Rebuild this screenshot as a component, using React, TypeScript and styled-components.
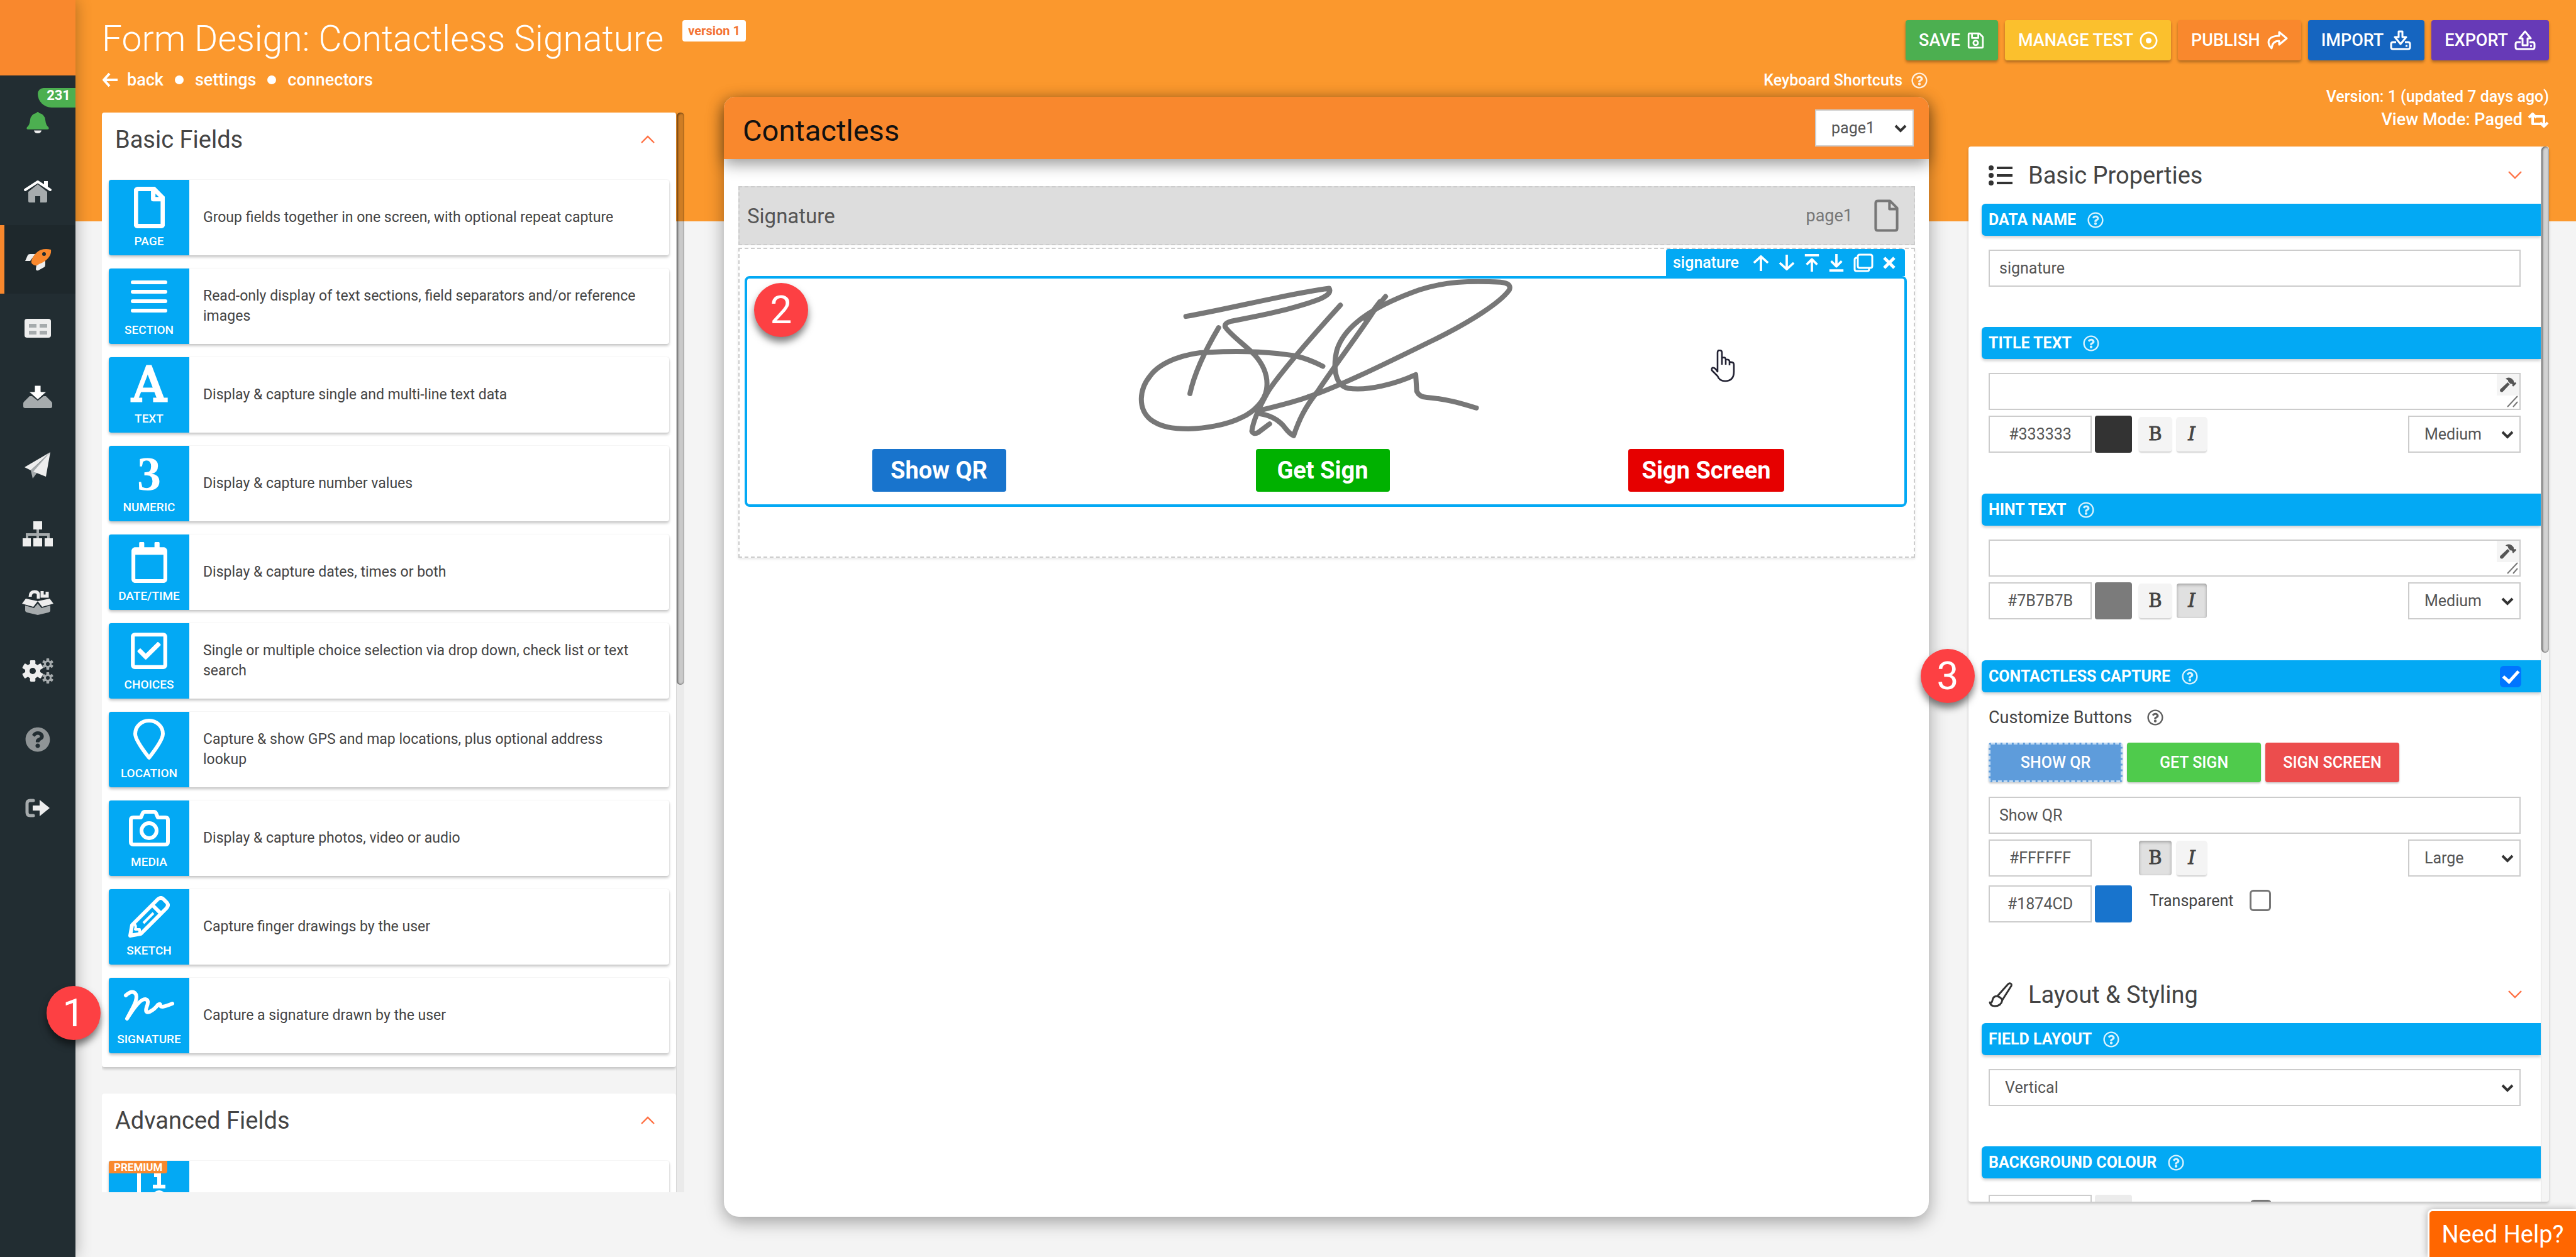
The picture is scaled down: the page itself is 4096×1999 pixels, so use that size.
import React from "react";
import styled, { createGlobalStyle, css } from "styled-components";
import { FaHammer, FaRegCalendar, FaRegCheckSquare, FaRegDotCircle, FaRegQuestionCircle, FaRegSave, FaQuestionCircle } from "react-icons/fa";

const blue = "#03a9f4";
const orange = "#fb982d";
const deepOrange = "#f9882d";
const light = "#eeeeee";
const grey = "#a6abad";

const GlobalStyle = createGlobalStyle`
  * { box-sizing: border-box; }
  body { margin: 0; font-family: Roboto, "Liberation Sans", sans-serif; color: #444; background: #f4f4f4; }
  button, input, select, textarea { font: inherit; color: inherit; margin: 0; }
  button { border: 0; padding: 0; cursor: pointer; }
  svg { display: block; flex: none; }
  h1, h2, p { margin: 0; font-weight: 400; }
  a { color: inherit; text-decoration: none; }
`;

const Page = styled.div`
  position: relative;
  display: flex;
  height: 100vh;
  overflow: hidden;
`;

/* ---------- navigation rail ---------- */
const Rail = styled.nav`
  position: relative;
  z-index: 1;
  width: 120px;
  flex: none;
  background: #222d32;
  box-shadow: 0 0 24px rgba(0, 0, 0, 0.3);
`;
const Brand = styled.div`
  height: 120px;
  margin-bottom: 20px;
  background: ${deepOrange};
`;
const RailLink = styled.a<{ $active?: boolean }>`
  position: relative;
  display: flex;
  align-items: center;
  justify-content: center;
  height: 109px;
  ${(p) => p.$active && css`
    background: #1e282c;
    box-shadow: inset 7px 0 0 ${deepOrange};
  `}
`;
const Count = styled.span`
  position: absolute;
  top: 0;
  right: 0;
  width: 60px;
  height: 31px;
  padding-right: 8px;
  border-radius: 10px 0 0 24px;
  background: #4caf50;
  color: #fff;
  font-weight: 700;
  font-size: 22px;
  line-height: 24px;
  text-align: right;
`;

/* ---------- page frame ---------- */
const Main = styled.main`
  flex: 1;
  min-width: 0;
  display: flex;
  flex-direction: column;
  padding: 0 43px 0 42px;
  background: linear-gradient(${orange} 352px, #f4f4f4 352px);
`;
const TopRow = styled.header`
  display: flex;
  align-items: flex-start;
  height: 110px;
  padding-top: 32px;
  color: #fff;
`;
const FormTitle = styled.h1`
  font-weight: 300;
  font-size: 57px;
  line-height: 60px;
`;
const VersionTag = styled.span`
  margin-left: 30px;
  padding: 0 9px;
  border-radius: 4px;
  background: #fff;
  color: #f37334;
  font-weight: 700;
  font-size: 20px;
  line-height: 34px;
`;
const Actions = styled.div`
  display: flex;
  gap: 11px;
  margin-left: auto;
`;
const ActionButton = styled.button<{ $color: string }>`
  display: flex;
  align-items: center;
  gap: 10px;
  height: 64px;
  padding: 0 21px;
  border-radius: 4px;
  background: ${(p) => p.$color};
  color: #fff;
  font-weight: 500;
  font-size: 27px;
  box-shadow: 0 3px 4px rgba(0, 0, 0, 0.3);
`;
const Columns = styled.div`
  flex: 1;
  min-height: 0;
  display: grid;
  grid-template-columns: 926px minmax(0, 1fr) 923px;
  gap: 63px;
`;
const Column = styled.section<{ $top?: number; $bottom: number }>`
  display: flex;
  flex-direction: column;
  min-height: 0;
  padding: ${(p) => p.$top || 0}px 0 ${(p) => p.$bottom}px;
`;
const Crumbs = styled.div`
  display: flex;
  align-items: center;
  gap: 18px;
  margin-bottom: 35px;
  color: #fff;
  font-weight: 500;
  font-size: 27px;
  line-height: 34px;
`;
const BackLink = styled.a`
  display: flex;
  align-items: center;
  gap: 15px;
`;
const Dot = styled.span`
  width: 14px;
  height: 14px;
  border-radius: 50%;
  background: #fff;
`;
const Shortcuts = styled.a`
  display: flex;
  align-items: center;
  justify-content: flex-end;
  gap: 14px;
  margin-bottom: 8px;
  padding-right: 2px;
  color: #fff;
  font-size: 25px;
  font-weight: 500;
  line-height: 36px;
`;
const VersionInfo = styled.div`
  display: flex;
  flex-direction: column;
  align-items: flex-end;
  margin-bottom: 24px;
  color: #fff;
  font-size: 25px;
  font-weight: 500;
  line-height: 37px;
`;
const ModeLink = styled.a`
  display: flex;
  align-items: center;
  gap: 8px;
  font-size: 27px;
`;

/* ---------- scrolling panels ---------- */
const ScrollPanel = styled.div<{ $card?: boolean }>`
  flex: 1;
  min-height: 0;
  display: flex;
  overflow: hidden;
  ${(p) => p.$card && css`
    background: #fff;
    border-radius: 4px;
    box-shadow: 0 3px 4px rgba(0, 0, 0, 0.2);
  `}
`;
const ScrollBody = styled.div`
  flex: 1;
  min-width: 0;
  overflow: hidden;
`;
const Track = styled.div`
  width: 13px;
  flex: none;
  background: rgba(0, 0, 0, 0.04);
  border-left: 1px solid rgba(0, 0, 0, 0.08);
`;
const Thumb = styled.div<{ $share: number }>`
  height: ${(p) => p.$share}%;
  border-radius: 7px;
  background: rgba(0, 0, 0, 0.14);
  box-shadow: inset 2px 1px 3px rgba(0, 0, 0, 0.5), inset -1px -1px 2px rgba(0, 0, 0, 0.25);
`;

/* ---------- field palette ---------- */
const Palette = styled.div`
  margin-bottom: 42px;
  padding: 0 11px 22px;
  border-radius: 4px;
  background: #fff;
  box-shadow: 0 3px 4px rgba(0, 0, 0, 0.2);
`;
const PaletteHead = styled.div`
  display: flex;
  align-items: center;
  justify-content: space-between;
  height: 85px;
  margin-bottom: 22px;
  padding: 0 22px 0 10px;
`;
const PanelTitle = styled.h2`
  font-size: 38px;
  line-height: 48px;
  color: #444;
`;
const FieldList = styled.div`
  display: flex;
  flex-direction: column;
  gap: 21px;
`;
const FieldCard = styled.div`
  display: flex;
  height: 120px;
  border-radius: 4px;
  box-shadow: 0 3px 4px rgba(0, 0, 0, 0.22), 0 0 2px rgba(0, 0, 0, 0.1);
`;
const Tile = styled.div`
  position: relative;
  width: 128px;
  flex: none;
  border-radius: 4px 0 0 4px;
  background: ${blue};
  color: #fff;
  text-align: center;
`;
const TileIcon = styled.div`
  display: flex;
  align-items: center;
  justify-content: center;
  height: 88px;
`;
const TileLabel = styled.div`
  font-weight: 500;
  font-size: 19px;
  line-height: 20px;
`;
const Numeral = styled.span`
  font-family: "Liberation Serif", serif;
  font-weight: 700;
  font-size: 76px;
  line-height: 88px;
`;
const Letter = styled.span`
  font-family: "DejaVu Serif", serif;
  font-size: 76px;
  line-height: 88px;
  -webkit-text-stroke: 3px #fff;
`;
const FieldText = styled.p`
  align-self: center;
  padding: 0 50px 0 22px;
  font-size: 23px;
  line-height: 32px;
`;
const Premium = styled.span`
  position: absolute;
  top: 0;
  left: 0;
  padding: 0 8px;
  border-radius: 4px 0 4px 0;
  background: ${deepOrange};
  color: #fff;
  font-weight: 700;
  font-size: 17px;
  line-height: 20px;
`;
const Chevron = ({ up }: { up?: boolean }) => (
  <svg width="24" height="15" viewBox="0 0 24 15" fill="none" stroke="#ff7043" strokeWidth="2.4">
    <path d={up ? "M2 13 12 3l10 10" : "M2 2l10 10L22 2"} />
  </svg>
);

/* ---------- form canvas ---------- */
const FormCard = styled.div`
  flex: 1;
  min-height: 0;
  border-radius: 18px 18px 24px 24px;
  background: #fff;
  box-shadow: 0 8px 28px rgba(0, 0, 0, 0.35);
`;
const FormHead = styled.div`
  display: flex;
  align-items: center;
  justify-content: space-between;
  height: 99px;
  padding: 0 24px 0 30px;
  border-radius: 18px 18px 0 0;
  background: ${deepOrange};
  box-shadow: 0 8px 24px rgba(0, 0, 0, 0.4);
`;
const FormName = styled.h2`
  font-size: 47px;
  line-height: 54px;
  padding-top: 8px;
  color: #111;
`;
const FormBody = styled.div`
  padding: 43px 22px 0 23px;
`;
const PageHead = styled.div`
  display: flex;
  align-items: center;
  height: 94px;
  margin-bottom: 4px;
  padding: 0 24px 0 12px;
  border: 2px dashed #ccc;
  background: #ddd;
  color: #777;
`;
const PageName = styled.span`
  flex: 1;
  color: #555;
  font-size: 33px;
`;
const PageId = styled.span`
  margin-right: 34px;
  font-size: 27px;
`;
const PageBody = styled.div`
  display: flex;
  flex-direction: column;
  padding: 0 11px 79px 8px;
  border: 2px dashed #ccc;
  box-shadow: 0 2px 4px rgba(0, 0, 0, 0.1);
`;
const FieldTab = styled.div`
  display: flex;
  align-items: center;
  align-self: flex-end;
  gap: 15px;
  height: 43px;
  margin-right: 3px;
  padding: 0 15px 0 11px;
  border-radius: 4px 4px 0 0;
  background: ${blue};
  color: #fff;
  font-weight: 500;
  font-size: 25px;
`;
const TabName = styled.span`
  margin-right: 7px;
`;
const TabButton = styled.button`
  background: none;
  color: #fff;
`;
const FieldBox = styled.div`
  position: relative;
  display: flex;
  flex-direction: column;
  align-items: center;
  gap: 16px;
  padding: 1px 10px 20px 0;
  border: 4px solid ${blue};
  border-radius: 8px;
  background: #fff;
`;
const CaptureRow = styled.div`
  display: grid;
  grid-template-columns: repeat(3, 1fr);
  justify-items: center;
  align-self: stretch;
`;
const CaptureButton = styled.button<{ $color: string }>`
  height: 68px;
  min-width: 213px;
  padding: 0 21px;
  border-radius: 4px;
  background: ${(p) => p.$color};
  color: #fff;
  font-weight: 700;
  font-size: 38px;
`;
const SignatureInk = styled.svg`
  margin-left: 12px;
`;
const Cursor = styled.svg`
  position: absolute;
  top: 113px;
  right: 268px;
`;

/* ---------- property controls ---------- */
const PropsHead = styled.div`
  display: flex;
  align-items: center;
  gap: 25px;
  height: 91px;
  padding: 0 29px 0 32px;
`;
const HeadTitle = styled(PanelTitle)`
  flex: 1;
`;
const Group = styled.div<{ $gap?: number }>`
  padding-bottom: ${(p) => p.$gap ?? 64}px;
`;
const Bar = styled.div`
  display: flex;
  align-items: center;
  gap: 18px;
  height: 51px;
  margin-left: 21px;
  padding: 0 31px 0 11px;
  border-radius: 6px 0 0 6px;
  background: ${blue};
  color: #fff;
  font-weight: 700;
  font-size: 25px;
  box-shadow: 0 3px 4px rgba(0, 0, 0, 0.18);
`;
const Controls = styled.div<{ $top?: number }>`
  display: flex;
  flex-direction: column;
  gap: 9px;
  padding: ${(p) => p.$top ?? 22}px 32px 0;
`;
const fieldLook = css`
  height: 59px;
  border: 2px solid #ccc;
  border-radius: 0;
  background: #fff;
  color: #555;
  font-size: 25px;
  outline: 0;
`;
const TextInput = styled.input`
  ${fieldLook}
  width: 100%;
  padding: 0 15px;
`;
const HexInput = styled.input`
  ${fieldLook}
  width: 164px;
  padding: 0;
  text-align: center;
`;
const AreaWrap = styled.div`
  position: relative;
  display: flex;
`;
const Area = styled.textarea`
  ${fieldLook}
  width: 100%;
  padding: 12px 15px;
  resize: none;
`;
const BuildButton = styled.button`
  position: absolute;
  top: 2px;
  right: 2px;
  display: flex;
  align-items: center;
  justify-content: center;
  width: 36px;
  height: 34px;
  background: #f4f4f4;
  color: #555;
`;
const Grip = styled.svg`
  position: absolute;
  right: 3px;
  bottom: 4px;
`;
const Row = styled.div<{ $top?: number }>`
  display: flex;
  align-items: center;
  padding-top: ${(p) => p.$top || 0}px;
`;
const Swatch = styled.button<{ $color: string }>`
  width: 59px;
  height: 59px;
  margin: 0 11px 0 5px;
  border-radius: 4px;
  background: ${(p) => p.$color};
`;
const Toggle = styled.button<{ $on?: boolean; $italic?: boolean; $w: number }>`
  width: ${(p) => p.$w}px;
  height: 55px;
  margin-right: 8px;
  border-radius: 4px;
  background: ${(p) => (p.$on ? "#e0e0e0" : "#f4f4f4")};
  color: #444;
  font-family: "DejaVu Serif", serif;
  font-size: 29px;
  font-style: ${(p) => (p.$italic ? "italic" : "normal")};
  line-height: 55px;
  -webkit-text-stroke: 1px #444;
  box-shadow: ${(p) => (p.$on ? "inset 0 2px 5px rgba(0,0,0,.3)" : "0 2px 2px rgba(0,0,0,.18)")};
`;
const SelectWrap = styled.div<{ $w?: number }>`
  position: relative;
  width: ${(p) => (p.$w ? p.$w + "px" : "100%")};
  margin-left: auto;
`;
const SelectBox = styled.select`
  ${fieldLook}
  display: block;
  width: 100%;
  padding: 0 0 0 24px;
  appearance: none;
`;
const SelectMark = styled.svg`
  position: absolute;
  right: 11px;
  top: 24px;
  pointer-events: none;
`;
const HelpIcon = styled(FaRegQuestionCircle)`
  opacity: 0.85;
`;
const Check = styled.input`
  appearance: none;
  display: grid;
  place-items: center;
  width: 34px;
  height: 34px;
  border: 3px solid #767676;
  border-radius: 6px;
  background: #fff;
  &:checked {
    border-color: #0075ff;
    background: #0075ff;
  }
  &:checked::after {
    content: "";
    width: 10px;
    height: 20px;
    margin-top: -5px;
    border: solid #fff;
    border-width: 0 5px 5px 0;
    transform: rotate(42deg);
  }
`;
const EndCheck = styled(Check)`
  margin-left: auto;
`;
const LoneCheck = styled(Check)`
  margin: 8px auto auto 177px;
`;
const CustomizeLabel = styled.div`
  display: flex;
  align-items: center;
  gap: 24px;
  height: 80px;
  padding: 0 32px;
  font-size: 27px;
`;
const PickRow = styled.div`
  display: flex;
  gap: 7px;
  padding: 0 32px;
`;
const PickButton = styled.button<{ $color: string; $picked?: boolean }>`
  width: 213px;
  height: 63px;
  border-radius: 4px;
  border: ${(p) => (p.$picked ? "3px dashed #c4dcf3" : "0")};
  background: ${(p) => p.$color};
  color: #fff;
  font-weight: 500;
  font-size: 25px;
  box-shadow: 0 2px 3px rgba(0, 0, 0, 0.2);
`;
const CheckLabel = styled.label`
  display: flex;
  align-items: center;
  gap: 26px;
  height: 48px;
  margin: 0 auto auto 17px;
  font-size: 25px;
`;

/* ---------- overlays ---------- */
const Step = styled.div`
  position: absolute;
  z-index: 2;
  width: 86px;
  height: 86px;
  border-radius: 50%;
  background: #fd4043;
  color: #fff;
  font-size: 62px;
  line-height: 86px;
  text-align: center;
  box-shadow: 0 8px 12px rgba(0, 0, 0, 0.5);
`;
const StepOne = styled(Step)`
  left: 74px;
  bottom: 345px;
`;
const StepTwo = styled(Step)`
  left: 11px;
  top: 7px;
`;
const StepThree = styled(Step)`
  right: 956px;
  top: 1032px;
`;
const NeedHelp = styled.button`
  position: absolute;
  right: 0;
  bottom: 0;
  width: 236px;
  height: 76px;
  border: solid #fff;
  border-width: 3px 0 0 3px;
  border-radius: 8px 0 0 0;
  background: #ff6600;
  color: #fff;
  font-size: 38px;
  box-shadow: 0 0 12px rgba(0, 0, 0, 0.3);
`;

/* ---------- icons ---------- */
const HomeIcon = () => (
  <svg width="46" height="36" viewBox="0 0 46 36">
    <path fill={grey} d="M8 19 23 7l15 12v15a2 2 0 0 1-2 2H27V26h-8v10h-9a2 2 0 0 1-2-2z" />
    <path fill="none" stroke="#fff" strokeWidth="4" strokeLinecap="round" strokeLinejoin="round" d="M3 16 23 3l20 13" />
    <path fill="#fff" d="M33 2h6v10l-6-4z" />
  </svg>
);
const RocketIcon = () => (
  <svg width="43" height="36" viewBox="0 0 43 36">
    <path fill={light} d="M1 20 5 11q1-2 4-2h8L9 20zM18 33l1-7 14-9v9q0 3-2 4l-9 5q-4 1-4-2z" />
    <path fill={deepOrange} d="M42 2Q28-1 20 6q-7 6-9 14-1 4 3 6 5 3 9-1 9-3 15-10 5-6 4-13z" />
    <circle cx="31" cy="9" r="3" fill="#222d32" />
  </svg>
);
const TableIcon = () => (
  <svg width="42" height="30" viewBox="0 0 42 30">
    <rect width="42" height="30" rx="4" fill={light} />
    <path fill={grey} d="M7 8h12v6H7zM24 8h12v6H24zM7 19h12v6H7zM24 19h12v6H24z" />
  </svg>
);
const InboxIcon = () => (
  <svg width="46" height="36" viewBox="0 0 46 40" preserveAspectRatio="none">
    <path fill={grey} d="M10 19h4l9 8 9-8h4l9 10q1 1 1 3v5q0 3-3 3H3q-3 0-3-3v-5q0-2 1-3z" />
    <path fill="#fff" stroke="#222d32" strokeWidth="1" d="M18 0h10v11h9L23 25 9 11h9z" />
  </svg>
);
const PlaneIcon = () => (
  <svg width="42" height="42" viewBox="0 0 42 42">
    <path fill={light} d="M41 0 0 24l10 5z" />
    <path fill={grey} d="M41 0 10 29l3 13 6-8z" />
    <path fill={light} d="M41 0 14 31l20 8z" />
  </svg>
);
const SitemapIcon = () => (
  <svg width="50" height="40" viewBox="0 0 50 40">
    <path fill="none" stroke={grey} strokeWidth="4" d="M25 12v16M8 28v-7h34v7" />
    <path fill={light} d="M18 0h14v13H18zM1 27h13v13H1zM18 27h14v13H18zM36 27h13v13H36z" />
  </svg>
);
const BoxIcon = () => (
  <svg width="50" height="40" viewBox="0 0 50 40">
    <path fill={grey} d="M5 25l14 4 6-7 6 7 14-4v8q0 2-3 3l-17 4-17-4q-3-1-3-3z" />
    <path fill={light} d="M6 14l19 4-7 9-18-5zM44 14l-19 4 7 9 18-5z" />
    <path fill="none" stroke={light} strokeWidth="5" d="M13 11q0-8 7-8 6 0 6 5v6M32 2v8h8V3" />
  </svg>
);
const gear = (cx: number, cy: number, r: number) =>
  Array.from({ length: 3 }, (_, i) => (
    <rect key={i} x={cx - r / 4} y={cy - r} width={r / 2} height={r * 2} rx={r / 12} transform={`rotate(${i * 60} ${cx} ${cy})`} />
  ));
const GearsIcon = () => (
  <svg width="50" height="40" viewBox="0 0 50 40">
    <g fill={light}>{gear(17, 20, 17)}<circle cx="17" cy="20" r="12" /></g>
    <circle cx="17" cy="20" r="5" fill="#222d32" />
    <g fill={grey}>{gear(41, 9, 9)}<circle cx="41" cy="9" r="6" />{gear(41, 31, 9)}<circle cx="41" cy="31" r="6" /></g>
    <circle cx="41" cy="9" r="3" fill="#222d32" /><circle cx="41" cy="31" r="3" fill="#222d32" />
  </svg>
);
const ExitIcon = () => (
  <svg width="40" height="30" viewBox="0 0 40 30">
    <path fill="none" stroke={grey} strokeWidth="5" strokeLinecap="round" d="M13 3H8Q3 3 3 8v14q0 5 5 5h5" />
    <path fill={light} d="M12 11h11V2l16 13-16 13v-9H12z" />
  </svg>
);
const BellIcon = () => (
  <svg width="36" height="36" viewBox="0 0 36 40" preserveAspectRatio="none">
    <path fill="#4caf50" d="M16 3a2 2 0 0 1 4 0q9 2 10 12 1 10 5 13 2 4-2 4H3q-4 0-2-4 4-3 5-13Q7 5 16 3z" />
    <path fill={light} d="M12 34h12q-1 5-6 5t-6-5z" />
  </svg>
);
const Line = ({ w, h, box, d, sw, cap }: { w: number; h: number; box: string; d: string; sw: number; cap?: boolean }) => (
  <svg width={w} height={h} viewBox={box} fill="none" stroke="currentColor" strokeWidth={sw} strokeLinejoin="round" strokeLinecap={cap ? "round" : "butt"}>
    <path d={d} />
  </svg>
);
const PageIcon = ({ w, h, sw }: { w: number; h: number; sw: number }) => (
  <Line w={w} h={h} box="0 0 48 64" sw={sw} d="M8 3h23l14 14v40q0 4-4 4H7q-4 0-4-4V7q0-4 5-4zM30 4v15h15" />
);
const CameraIcon = () => (
  <svg width="65" height="58" viewBox="0 0 65 58" fill="none" stroke="#fff" strokeWidth="6" strokeLinejoin="round">
    <path d="M7 12h12l3-7q1-2 3-2h15q2 0 3 2l3 7h12q4 0 4 4v35q0 4-4 4H7q-4 0-4-4V16q0-4 4-4z" />
    <circle cx="32" cy="33" r="12" />
  </svg>
);
const PencilIcon = () => (
  <svg width="66" height="66" viewBox="0 0 66 66" fill="none" stroke="#fff" strokeWidth="6" strokeLinejoin="round">
    <path d="M3 63l3-17L47 5q5-4 9 0l5 5q4 4 0 9L20 60zM38 14l14 14" />
    <path strokeWidth="4" d="M10 45q3 3 1 8h7v5" />
    <path strokeWidth="4" d="M24 43l16-16" />
  </svg>
);
const TrayArrow = ({ up }: { up?: boolean }) => (
  <svg width="34" height="32" viewBox="0 0 34 32" fill="none" stroke="#fff" strokeWidth="3" strokeLinejoin="round">
    <path d="M10 19H5q-3 0-3 3v5q0 3 3 3h24q3 0 3-3v-5q0-3-3-3h-5" />
    <path d={up ? "M13 24V13H8l9-11 9 11h-5v11z" : "M14 2h6v9h6l-9 11-9-11h6z"} />
    <path d="M25 25h3" />
  </svg>
);
const PublishIcon = () => (
  <Line w={34} h={30} box="0 0 34 30" sw={3} d="M20 2l12 10-12 10v-6Q9 16 8 28 1 21 4 14 8 8 20 8z" />
);
const SwapIcon = () => (
  <Line w={34} h={24} box="0 0 34 24" sw={4} d="M2 8l6-6 6 6M8 3v15h13M32 16l-6 6-6-6M26 21V6H13" />
);
const HelpMark = () => <HelpIcon size={26} />;

const fields: { label: string; text: string; icon: React.ReactNode }[] = [
  { label: "PAGE", text: "Group fields together in one screen, with optional repeat capture", icon: <PageIcon w={49} h={66} sw={7} /> },
  { label: "SECTION", text: "Read-only display of text sections, field separators and/or reference images", icon: <Line w={58} h={58} box="0 0 58 58" sw={6} cap d="M3 7h52M3 22h52M3 37h52M3 52h52" /> },
  { label: "TEXT", text: "Display & capture single and multi-line text data", icon: <Letter>A</Letter> },
  { label: "NUMERIC", text: "Display & capture number values", icon: <Numeral>3</Numeral> },
  { label: "DATE/TIME", text: "Display & capture dates, times or both", icon: <FaRegCalendar size={65} /> },
  { label: "CHOICES", text: "Single or multiple choice selection via drop down, check list or text search", icon: <FaRegCheckSquare size={66} /> },
  { label: "LOCATION", text: "Capture & show GPS and map locations, plus optional address lookup", icon: <Line w={50} h={66} box="0 0 50 66" sw={6} d="M25 62Q3 34 3 24a22 21 0 0 1 44 0Q47 34 25 62z" /> },
  { label: "MEDIA", text: "Display & capture photos, video or audio", icon: <CameraIcon /> },
  { label: "SKETCH", text: "Capture finger drawings by the user", icon: <PencilIcon /> },
  { label: "SIGNATURE", text: "Capture a signature drawn by the user", icon: <Line w={82} h={50} box="0 0 82 50" sw={6} cap d="M4 9Q15-1 20 7q3 6-4 20L6 46Q26 14 35 15q7 1 2 13-3 10 5 7 8-4 13-11 4-3 4 1 0 5 19-3" /> },
];

const Select = ({ value, label, w }: { value: string; label: string; w?: number }) => (
  <SelectWrap $w={w}>
    <SelectBox aria-label={label} defaultValue={value}>
      <option>{value}</option>
    </SelectBox>
    <SelectMark width="20" height="14" viewBox="0 0 20 14" fill="none" stroke="#333" strokeWidth="4">
      <path d="M2 2l8 8 8-8" />
    </SelectMark>
  </SelectWrap>
);

const FontRow = ({ hex, size, bold, italic, name }: { hex: string; size: string; bold?: boolean; italic?: boolean; name: string }) => (
  <Row>
    <HexInput aria-label={`${name} colour`} defaultValue={hex} />
    <Swatch type="button" aria-label={`Pick ${name} colour`} $color={hex} />
    <Toggle type="button" aria-label="Bold" $on={bold} $w={52}>B</Toggle>
    <Toggle type="button" aria-label="Italic" $on={italic} $italic $w={48}>I</Toggle>
    <Select label={`${name} size`} value={size} w={179} />
  </Row>
);

const Title = ({ children }: { children: React.ReactNode }) => (
  <Bar><span>{children}</span><HelpMark /></Bar>
);

const TextGroup = ({ title, hex, italic }: { title: string; hex: string; italic?: boolean }) => (
  <Group $gap={65}>
    <Title>{title}</Title>
    <Controls>
      <AreaWrap>
        <Area aria-label={title} rows={1} />
        <BuildButton type="button" aria-label="Build formula"><FaHammer size={26} /></BuildButton>
        <Grip width="20" height="20" viewBox="0 0 20 20" stroke="#777" strokeWidth="2">
          <path d="M2 19 18 2M11 19l7-8" />
        </Grip>
      </AreaWrap>
      <FontRow name={title} hex={hex} size="Medium" italic={italic} />
    </Controls>
  </Group>
);

const Autograph = () => (
  <SignatureInk width="601" height="254" viewBox="30 35 1490 820" preserveAspectRatio="none" fill="none" stroke="#777" strokeLinecap="round" strokeLinejoin="round">
    {[
      "M220 226C400 185 620 110 785 82C800 118 740 145 650 178C540 220 440 238 395 252Q370 262 375 280C395 320 450 370 490 422C530 480 545 540 538 600C530 660 490 715 440 745C380 785 290 802 230 803C170 803 120 795 80 755C30 700 35 600 80 530C120 460 220 412 310 410C420 402 540 405 650 428Q705 445 760 482",
      "M349 284Q260 480 236 622",
      "M829 168C720 325 590 520 545 610C510 690 485 760 480 815Q488 835 505 822L550 778",
      "M500 712C570 690 640 668 700 640C830 585 1050 440 1200 345C1340 255 1460 155 1495 90Q1505 55 1460 50C1330 42 1240 48 1140 90C1000 155 850 250 815 400C800 480 805 580 860 595C940 610 1050 570 1126 525Q1128 570 1130 610Q1140 640 1170 642C1250 650 1310 675 1365 696",
      "M510 725C560 735 590 760 612 800Q630 830 645 838C665 760 690 690 740 610C800 490 900 320 960 200L1007 124",
      "M985 150L930 245",
    ].map((d) => (
      <path key={d} d={d} strokeWidth="8" vectorEffect="non-scaling-stroke" />
    ))}
  </SignatureInk>
);

export default function App() {
  return (
    <Page>
      <GlobalStyle />
      <Rail>
        <Brand />
        <RailLink href="#" aria-label="Notifications"><Count>231</Count><BellIcon /></RailLink>
        <RailLink href="#" aria-label="Home"><HomeIcon /></RailLink>
        <RailLink href="#" aria-label="Build" $active><RocketIcon /></RailLink>
        <RailLink href="#" aria-label="Data"><TableIcon /></RailLink>
        <RailLink href="#" aria-label="Entries"><InboxIcon /></RailLink>
        <RailLink href="#" aria-label="Dispatch"><PlaneIcon /></RailLink>
        <RailLink href="#" aria-label="Hierarchy"><SitemapIcon /></RailLink>
        <RailLink href="#" aria-label="Users"><BoxIcon /></RailLink>
        <RailLink href="#" aria-label="Configuration"><GearsIcon /></RailLink>
        <RailLink href="#" aria-label="Help"><FaQuestionCircle size={40} color="#8f9496" /></RailLink>
        <RailLink href="#" aria-label="Log out"><ExitIcon /></RailLink>
      </Rail>

      <Main>
        <TopRow>
          <FormTitle>Form Design: Contactless Signature</FormTitle>
          <VersionTag>version 1</VersionTag>
          <Actions>
            <ActionButton $color="#4caf50">SAVE <FaRegSave size={29} /></ActionButton>
            <ActionButton $color="#fbc02d">MANAGE TEST <FaRegDotCircle size={29} /></ActionButton>
            <ActionButton $color={deepOrange}>PUBLISH <PublishIcon /></ActionButton>
            <ActionButton $color="#1565c0">IMPORT <TrayArrow /></ActionButton>
            <ActionButton $color="#673ab7">EXPORT <TrayArrow up /></ActionButton>
          </Actions>
        </TopRow>

        <Columns>
          <Column $bottom={103}>
            <Crumbs>
              <BackLink href="#">
                <Line w={25} h={24} box="0 0 25 24" sw={4} d="M12 2 3 12l9 10M3 12h22" />
                back
              </BackLink>
              <Dot />
              <a href="#">settings</a>
              <Dot />
              <a href="#">connectors</a>
            </Crumbs>
            <ScrollPanel>
              <ScrollBody>
                <Palette>
                  <PaletteHead><PanelTitle>Basic Fields</PanelTitle><Chevron up /></PaletteHead>
                  <FieldList>
                    {fields.map((f) => (
                      <FieldCard key={f.label}>
                        <Tile><TileIcon>{f.icon}</TileIcon><TileLabel>{f.label}</TileLabel></Tile>
                        <FieldText>{f.text}</FieldText>
                      </FieldCard>
                    ))}
                  </FieldList>
                </Palette>
                <Palette>
                  <PaletteHead><PanelTitle>Advanced Fields</PanelTitle><Chevron up /></PaletteHead>
                  <FieldCard>
                    <Tile>
                      <TileIcon>
                        <svg width="64" height="64" viewBox="0 0 64 64" fill="none" stroke="#fff" strokeWidth="6">
                          <path d="M16 2v58M4 48l12 12 12-12M40 11h8v18M38 29h20M40 46a8 8 0 1 1 16 0a8 8 0 1 1-16 0" />
                        </svg>
                      </TileIcon>
                      <Premium>PREMIUM</Premium>
                    </Tile>
                  </FieldCard>
                </Palette>
              </ScrollBody>
              <Track><Thumb $share={53} /></Track>
            </ScrollPanel>
          </Column>

          <Column $bottom={64}>
            <Shortcuts href="#">Keyboard Shortcuts <HelpMark /></Shortcuts>
            <FormCard>
              <FormHead>
                <FormName>Contactless</FormName>
                <div><Select label="Page" value="page1" w={157} /></div>
              </FormHead>
              <FormBody>
                <PageHead>
                  <PageName>Signature</PageName>
                  <PageId>page1</PageId>
                  <PageIcon w={39} h={52} sw={5} />
                </PageHead>
                <PageBody>
                  <FieldTab>
                    <TabName>signature</TabName>
                    <TabButton aria-label="Move up"><Line w={26} h={26} box="0 0 28 28" sw={4} d="M2 14 14 3l12 11M14 4v24" /></TabButton>
                    <TabButton aria-label="Move down"><Line w={26} h={26} box="0 0 28 28" sw={4} d="M2 14l12 11 12-11M14 0v24" /></TabButton>
                    <TabButton aria-label="Move to top"><Line w={24} h={28} box="0 0 24 30" sw={4} d="M0 2h24M3 18l9-9 9 9M12 10v20" /></TabButton>
                    <TabButton aria-label="Move to bottom"><Line w={24} h={28} box="0 0 24 30" sw={4} d="M0 28h24M3 12l9 9 9-9M12 20V0" /></TabButton>
                    <TabButton aria-label="Duplicate"><Line w={32} h={30} box="0 0 32 30" sw={3} d="M10 2h17q3 0 3 3v15q0 3-3 3H10q-3 0-3-3V5q0-3 3-3zM7 7H5Q2 7 2 10v15q0 3 3 3h17q3 0 3-3v-2" /></TabButton>
                    <TabButton aria-label="Remove"><Line w={20} h={20} box="0 0 20 20" sw={5} d="M2 2l16 16M18 2 2 18" /></TabButton>
                  </FieldTab>
                  <FieldBox>
                    <StepTwo>2</StepTwo>
                    <Autograph />
                    <CaptureRow>
                      <CaptureButton $color="#1874cd">Show QR</CaptureButton>
                      <CaptureButton $color="#00b100">Get Sign</CaptureButton>
                      <CaptureButton $color="#e60000">Sign Screen</CaptureButton>
                    </CaptureRow>
                    <Cursor width="40" height="52" viewBox="0 0 40 52" fill="#fff" stroke="#223" strokeWidth="2.6" strokeLinejoin="round">
                      <path d="M11 29V5q0-4 3-4 4 0 4 4v14-6q6-2 6 3v4-4q6-1 6 3v3-2q7-1 7 4v11q0 15-14 15-9 0-12-8L2 33q-1-5 3-4 3 1 6 6zM18 13v11M24 16v8M30 18v7" />
                    </Cursor>
                  </FieldBox>
                </PageBody>
              </FormBody>
            </FormCard>
          </Column>

          <Column $top={25} $bottom={88}>
            <VersionInfo>
              <span>Version: 1 (updated 7 days ago)</span>
              <ModeLink href="#">View Mode: Paged <SwapIcon /></ModeLink>
            </VersionInfo>
            <ScrollPanel $card>
              <ScrollBody>
                <PropsHead>
                  <svg width="38" height="32" viewBox="0 0 38 32" fill="#333">
                    <circle cx="4" cy="4" r="4" /><circle cx="4" cy="16" r="4" /><circle cx="4" cy="28" r="4" />
                    <path d="M13 2h25v4H13zM13 14h25v4H13zM13 26h25v4H13z" />
                  </svg>
                  <HeadTitle>Basic Properties</HeadTitle>
                  <Chevron />
                </PropsHead>
                <Group>
                  <Title>DATA NAME</Title>
                  <Controls><TextInput aria-label="Data name" defaultValue="signature" /></Controls>
                </Group>
                <TextGroup title="TITLE TEXT" hex="#333333" />
                <TextGroup title="HINT TEXT" hex="#7B7B7B" italic />
                <Group $gap={69}>
                  <Bar>
                    <label htmlFor="contactless">CONTACTLESS CAPTURE</label>
                    <HelpMark />
                    <EndCheck id="contactless" type="checkbox" defaultChecked />
                  </Bar>
                  <CustomizeLabel>Customize Buttons <HelpMark /></CustomizeLabel>
                  <PickRow>
                    <PickButton $color="#5e9cdb" $picked>SHOW QR</PickButton>
                    <PickButton $color="#4fcb4c">GET SIGN</PickButton>
                    <PickButton $color="#ec4d4d">SIGN SCREEN</PickButton>
                  </PickRow>
                  <Controls $top={23}>
                    <TextInput aria-label="Button text" defaultValue="Show QR" />
                    <FontRow name="Button text" hex="#FFFFFF" size="Large" bold />
                    <Row $top={5}>
                      <HexInput aria-label="Button background" defaultValue="#1874CD" />
                      <Swatch type="button" aria-label="Pick button background" $color="#1874cd" />
                      <CheckLabel>Transparent <Check type="checkbox" /></CheckLabel>
                    </Row>
                  </Controls>
                </Group>
                <PropsHead>
                  <svg width="38" height="40" viewBox="0 0 38 40" fill="none" stroke="#333" strokeWidth="3" strokeLinejoin="round">
                    <path d="M14 22 31 3q2-2 4-1t1 4L22 28q-3-4-8-6zM14 22q-7 0-8 7-1 5-4 3 1 6 8 6 10 0 12-10" />
                  </svg>
                  <HeadTitle>Layout &amp; Styling</HeadTitle>
                  <Chevron />
                </PropsHead>
                <Group>
                  <Title>FIELD LAYOUT</Title>
                  <Controls><Select label="Field layout" value="Vertical" /></Controls>
                </Group>
                <Title>BACKGROUND COLOUR</Title>
                <Controls $top={26}>
                  <Row>
                    <HexInput aria-label="Background colour" />
                    <Swatch type="button" aria-label="Pick background colour" $color="#ececec" />
                    <LoneCheck type="checkbox" aria-label="No background" />
                  </Row>
                </Controls>
              </ScrollBody>
              <Track><Thumb $share={48} /></Track>
            </ScrollPanel>
          </Column>
        </Columns>
      </Main>

      <StepOne>1</StepOne>
      <StepThree>3</StepThree>
      <NeedHelp>Need Help?</NeedHelp>
    </Page>
  );
}
